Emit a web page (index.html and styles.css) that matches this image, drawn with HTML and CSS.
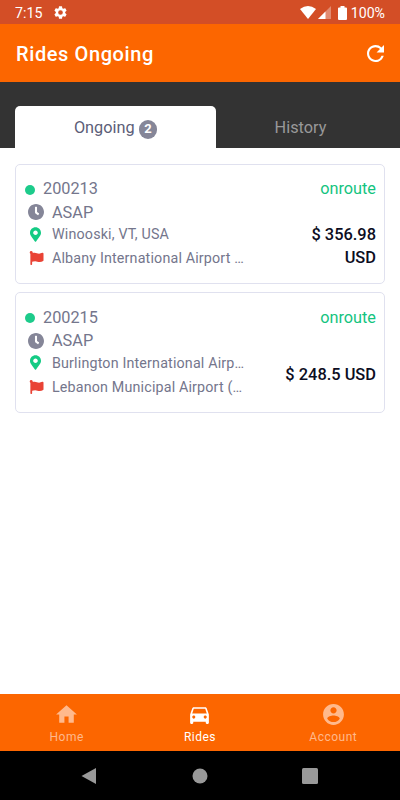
FILE: index.html
```
<!DOCTYPE html>
<html lang="en">
<head>
    <meta charset="UTF-8">
    <meta name="viewport" content="width=device-width, initial-scale=1">
    <title>Rides Ongoing</title>
    <link rel="stylesheet" href="styles.css">
</head>
<body>
    <svg class="sprite">
        <symbol id="clock" viewBox="8 8 496 496"><path d="M256,8C119,8,8,119,8,256S119,504,256,504,504,393,504,256,393,8,256,8Zm92.49,313h0l-20,25a16,16,0,0,1-22.49,2.5h0l-67-49.72a40,40,0,0,1-15-31.23V112a16,16,0,0,1,16-16h32a16,16,0,0,1,16,16V256l58,42.5A16,16,0,0,1,348.49,321Z"/></symbol>
        <symbol id="pin" viewBox="0 0 384 512"><path d="M172.268 501.67C26.97 291.031 0 269.413 0 192 0 85.961 85.961 0 192 0s192 85.961 192 192c0 77.413-26.97 99.031-172.268 309.67-9.535 13.774-29.93 13.773-39.464 0zM192 272c44.183 0 80-35.817 80-80s-35.817-80-80-80-80 35.817-80 80 35.817 80 80 80z"/></symbol>
        <symbol id="flag" viewBox="0 0 512 512"><path d="M349.565 98.783C295.978 98.783 251.721 64 184.348 64c-24.955 0-47.309 4.384-68.045 12.013a55.947 55.947 0 0 0 3.586-23.562C118.117 24.015 94.806 1.206 66.338.048 34.345-1.254 8 24.296 8 56c0 19.026 9.497 35.825 24 45.945V488c0 13.255 10.745 24 24 24h16c13.255 0 24-10.745 24-24v-94.4c28.311-12.064 63.582-22.122 114.435-22.122 53.588 0 97.844 34.783 165.217 34.783 48.169 0 86.667-16.294 122.505-40.858C506.84 359.452 512 349.571 512 339.045v-243.1c0-23.393-24.269-38.87-45.485-29.016-34.338 15.948-76.454 31.854-116.95 31.854z"/></symbol>
    </svg>

    <div class="status-bar">
        <span class="time">7:15</span>
        <svg class="gear" viewBox="2 2 20 20"><path d="M19.14 12.94c.04-.3.06-.61.06-.94s-.02-.64-.07-.94l2.03-1.58a.49.49 0 0 0 .12-.61l-1.92-3.32a.49.49 0 0 0-.59-.22l-2.39.96a7 7 0 0 0-1.62-.94l-.36-2.54a.48.48 0 0 0-.48-.41h-3.84a.48.48 0 0 0-.47.41l-.36 2.54c-.59.24-1.13.57-1.62.94l-2.39-.96a.48.48 0 0 0-.59.22L2.74 8.87a.48.48 0 0 0 .12.61l2.03 1.58c-.05.3-.09.63-.09.94s.02.64.07.94l-2.03 1.58a.49.49 0 0 0-.12.61l1.92 3.32c.12.22.37.29.59.22l2.39-.96c.5.38 1.03.7 1.62.94l.36 2.54c.05.24.24.41.48.41h3.84c.24 0 .44-.17.47-.41l.36-2.54a7 7 0 0 0 1.62-.94l2.39.96c.22.08.47 0 .59-.22l1.92-3.32a.48.48 0 0 0-.12-.61zM12 15.6a3.6 3.6 0 1 1 0-7.2 3.6 3.6 0 0 1 0 7.2z"/></svg>
        <svg class="wifi" viewBox="0 0 16 13"><path d="M0 3Q8-3 16 3L8 13z"/></svg>
        <svg class="signal" viewBox="0 0 13 13"><path d="M0 13L13 0V13z" opacity=".35"/><path d="M0 13L7.5 5.5V13z"/></svg>
        <svg class="battery" viewBox="0 0 9 14"><path d="M2.5 0h4v1.5H8a1 1 0 0 1 1 1V13a1 1 0 0 1-1 1H1a1 1 0 0 1-1-1V2.500a1 1 0 0 1 1-1h1.500z"/></svg>
        <span class="percent">100%</span>
    </div>

    <header class="header">
        <h1>Rides Ongoing</h1>
        <svg class="refresh" viewBox="4 4 16 16"><path d="M17.650 6.350A7.958 7.958 0 0 0 12 4c-4.420 0-7.990 3.580-7.990 8s3.570 8 7.990 8c3.730 0 6.840-2.550 7.730-6h-2.080A5.990 5.990 0 0 1 12 18c-3.310 0-6-2.690-6-6s2.690-6 6-6c1.660 0 3.140.69 4.220 1.780L13 11h7V4z"/></svg>
    </header>

    <div class="tabs">
        <div class="tab active"><span>Ongoing</span><span class="badge">2</span></div>
        <div class="tab"><span>History</span></div>
    </div>

    <main class="rides">
        <div class="card">
            <div class="card-top">
                <span class="dot"></span>
                <span class="ride-id">200213</span>
                <span class="ride-status">onroute</span>
            </div>
            <div class="card-body">
                <div class="info">
                    <div class="row when"><svg class="clock"><use href="#clock"/></svg><span>ASAP</span></div>
                    <div class="row from"><svg class="pin"><use href="#pin"/></svg><span class="address">Winooski, VT, USA</span></div>
                    <div class="row to"><svg class="flag"><use href="#flag"/></svg><span class="address">Albany International Airport …</span></div>
                </div>
                <div class="price">$ 356.98 USD</div>
            </div>
        </div>

        <div class="card">
            <div class="card-top">
                <span class="dot"></span>
                <span class="ride-id">200215</span>
                <span class="ride-status">onroute</span>
            </div>
            <div class="card-body">
                <div class="info">
                    <div class="row when"><svg class="clock"><use href="#clock"/></svg><span>ASAP</span></div>
                    <div class="row from"><svg class="pin"><use href="#pin"/></svg><span class="address">Burlington International Airp…</span></div>
                    <div class="row to"><svg class="flag"><use href="#flag"/></svg><span class="address">Lebanon Municipal Airport (…</span></div>
                </div>
                <div class="price">$ 248.5 USD</div>
            </div>
        </div>
    </main>

    <nav class="bottom-nav">
        <div class="nav-item">
            <svg viewBox="0 0 24 24"><path d="M10 20v-6h4v6h5v-8h3L12 3 2 12h3v8z"/></svg>
            <span>Home</span>
        </div>
        <div class="nav-item selected">
            <svg viewBox="0 0 24 24"><path d="M18.920 6.010C18.720 5.420 18.160 5 17.500 5h-11c-.66 0-1.210.42-1.420 1.010L3 12v8c0 .55.45 1 1 1h1c.55 0 1-.45 1-1v-1h12v1c0 .55.45 1 1 1h1c.55 0 1-.45 1-1v-8l-2.080-5.990zM6.500 16c-.83 0-1.500-.67-1.500-1.500S5.670 13 6.500 13s1.500.67 1.500 1.500S7.330 16 6.500 16zm11 0c-.83 0-1.500-.67-1.500-1.500s.67-1.500 1.500-1.500 1.500.67 1.500 1.500-.67 1.500-1.500 1.500zM5 11l1.500-4.500h11L19 11H5z"/></svg>
            <span>Rides</span>
        </div>
        <div class="nav-item">
            <svg viewBox="0 0 24 24"><path d="M12 2C6.480 2 2 6.480 2 12s4.480 10 10 10 10-4.480 10-10S17.520 2 12 2zm0 3c1.660 0 3 1.340 3 3s-1.340 3-3 3-3-1.340-3-3 1.340-3 3-3zm0 14.200a7.200 7.200 0 0 1-6-3.220c.03-1.990 4-3.080 6-3.080 1.990 0 5.970 1.090 6 3.080a7.200 7.200 0 0 1-6 3.220z"/></svg>
            <span>Account</span>
        </div>
    </nav>

    <div class="system-nav">
        <svg viewBox="0 0 18 18"><path d="M16 1v16L1.500 9z"/></svg>
        <svg viewBox="0 0 18 18"><circle cx="9" cy="9" r="7.500"/></svg>
        <svg viewBox="0 0 18 18"><rect x="1" y="1" width="16" height="16" rx="1.500"/></svg>
    </div>
</body>
</html>
```
FILE: styles.css
```
* {
    box-sizing: border-box;
}
body {
    margin: 0;
    height: 800px;
    display: flex;
    flex-direction: column;
    font-family: Roboto, "Liberation Sans", sans-serif;
    background: #fff;
    color: #74768c;
    overflow: hidden;
}
svg {
    display: block;
    flex: none;
    fill: currentColor;
}
.sprite {
    position: absolute;
    width: 0;
    height: 0;
}

/* status bar */
.status-bar {
    height: 24px;
    padding: 1px 15px 0;
    display: flex;
    align-items: center;
    background: #d34e26;
    color: #fff;
    font-size: 14.2px;
    line-height: 24px;
}
.gear {
    width: 13px;
    height: 13px;
    margin-left: 12px;
}
.wifi {
    width: 16px;
    height: 13px;
    margin-left: auto;
}
.signal {
    width: 13px;
    height: 13px;
    margin-left: 2px;
}
.battery {
    width: 9px;
    height: 14px;
    margin: 0 4px 0 7px;
}

.header {
    height: 58px;
    padding: 0 16px;
    display: flex;
    align-items: center;
    justify-content: space-between;
    background: #fc6600;
    color: #fff;
}
h1 {
    margin: 2px 0 0;
    font-size: 20px;
    font-weight: 500;
    letter-spacing: 0.6px;
}
.refresh {
    width: 17px;
    height: 17px;
}

/* tabs */
.tabs {
    height: 65.500px;
    padding: 24px 15px 0;
    display: flex;
    background: #333;
}
.tab {
    flex: 1;
    display: flex;
    justify-content: center;
    padding-top: 11px;
    font-size: 16.3px;
    line-height: 21px;
    color: #999;
}
.tab.active {
    flex: 0 0 201px;
    background: #fff;
    color: #5c5e78;
    border-radius: 5px 5px 0 0;
}
.badge {
    width: 18.500px;
    height: 18.500px;
    margin: 3px 0 0 4px;
    border-radius: 50%;
    background: #858698;
    color: #fff;
    font-size: 13px;
    font-weight: 700;
    line-height: 18px;
    text-align: center;
}

/* ride cards */
.rides {
    flex: 1;
    padding: 16px 15px;
    display: flex;
    flex-direction: column;
    gap: 8px;
}
.card {
    height: 120.500px;
    padding: 12.500px 8px 0 9px;
    border: 1px solid #e0e1ef;
    border-radius: 5px;
}
.card-top {
    display: flex;
    align-items: center;
    height: 23px;
    font-size: 16.3px;
}
.dot {
    width: 10px;
    height: 10px;
    margin: 2px 8px 0 0;
    border-radius: 50%;
    background: #1dcb8b;
}
.ride-status {
    margin-left: auto;
    color: #14c480;
}
.card-body {
    display: flex;
    justify-content: space-between;
}
.info {
    padding-left: 3px;
}
.row {
    display: flex;
    align-items: center;
    height: 24px;
    font-size: 14.3px;
}
.row.when {
    font-size: 16.3px;
}
.row.from {
    height: 20px;
}
.row.to {
    height: 28px;
}
.clock {
    width: 16px;
    height: 16px;
    margin-right: 8px;
    color: #858698;
}
.pin {
    width: 11px;
    height: 15px;
    margin: 0 11px 0 2px;
    color: #14cb84;
}
.flag {
    width: 15px;
    height: 14px;
    margin: 0 8px 0 1px;
    color: #e94335;
}
.address {
    letter-spacing: 0.16px;
    white-space: nowrap;
}
.price {
    width: 96px;
    padding-top: 20px;
    display: flex;
    align-items: center;
    justify-content: flex-end;
    color: #0c0d22;
    font-size: 16.4px;
    font-weight: 500;
    line-height: 23px;
    text-align: right;
}

/* bottom navigation */
.bottom-nav {
    height: 57px;
    display: flex;
    background: #fc6600;
    color: #ffb98c;
}
.nav-item {
    flex: 1;
    display: flex;
    flex-direction: column;
    align-items: center;
    padding-top: 8px;
    font-size: 12px;
    line-height: 14px;
    letter-spacing: 0.5px;
}
.nav-item svg {
    width: 25px;
    height: 25px;
    margin-bottom: 3px;
}
.nav-item.selected {
    color: #fff;
}
.system-nav {
    height: 49px;
    padding: 0 81px 0 80px;
    display: flex;
    align-items: center;
    justify-content: space-between;
    background: #000;
    color: #999;
}
.system-nav svg {
    width: 18px;
    height: 18px;
}
```
